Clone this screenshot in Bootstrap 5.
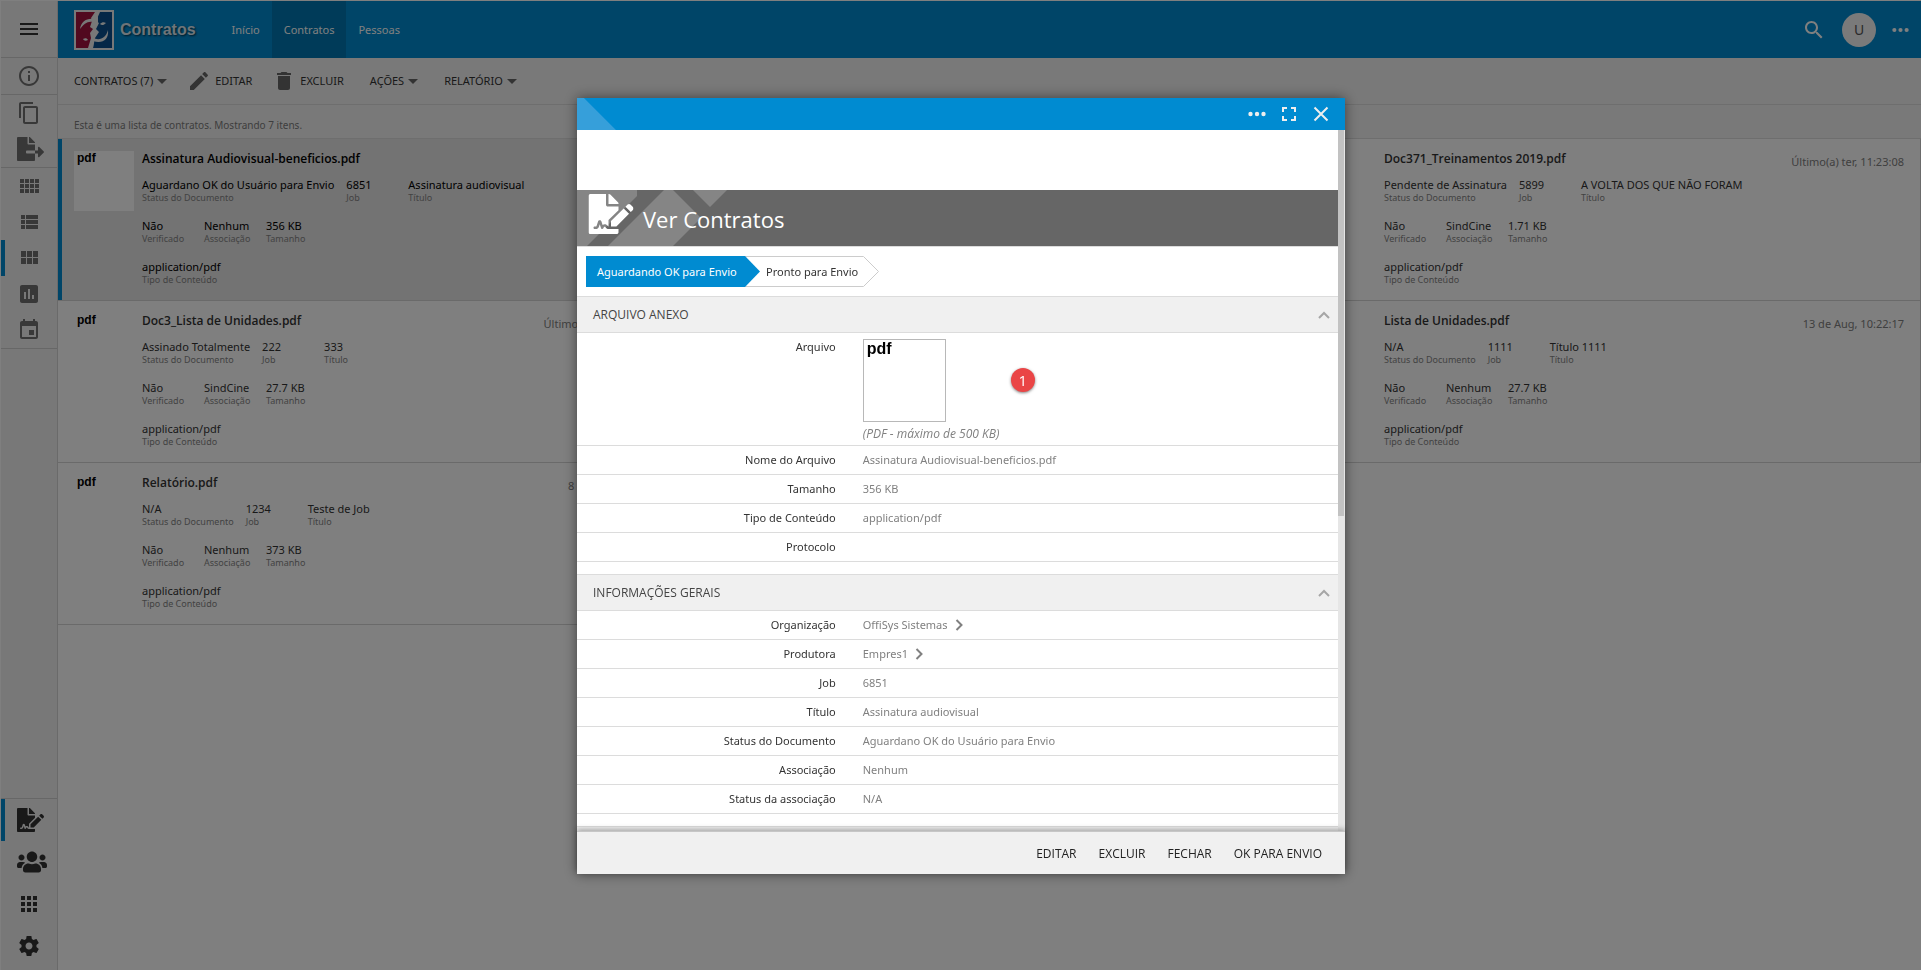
<!DOCTYPE html>
<html lang="pt-BR">
<head>
<meta charset="utf-8">
<meta name="viewport" content="width=device-width, initial-scale=1">
<title>Contratos</title>
<link href="https://cdn.jsdelivr.net/npm/bootstrap@5.3.0/dist/css/bootstrap.min.css" rel="stylesheet">
<script src="https://cdn.jsdelivr.net/npm/bootstrap@5.3.0/dist/js/bootstrap.bundle.min.js"></script>
<style>
  :root { --brand: #008bd1; --line: #dcdcdc; --panel: #f0f0f0; }
  body { font: 11px/16px "Noto Sans", "Open Sans", sans-serif; color: #333; background: #fff; }
  a { color: inherit; text-decoration: none; }
  svg { fill: currentColor; display: block; flex: none; }
  button { border: 0; background: none; padding: 0; color: inherit; }
  .app { min-height: 100vh; border-top: 1px solid #fff; border-left: 1px solid #fff; }

  .side { width: 57px; background: var(--panel); border-right: 1px solid #d4d4d4; color: #707070; }
  .side-group { border-bottom: 1px solid #cfcfcf; }
  .side-btn { display: block; height: 36px; width: 100%; padding-left: 16px; }
  .side-btn svg { width: 24px; height: 24px; }
  .side-btn svg.wide { width: 27px; height: 24px; }
  .side-btn svg.people { width: 30px; height: 24px; }
  .side-btn.current { box-shadow: inset 4px 0 0 var(--brand); }
  .side-menu { height: 56px; color: #333; }
  .side-bottom { border-top: 1px solid #cfcfcf; padding-bottom: 3px; color: #333; }
  .side-bottom .side-btn { height: 42px; }

  .topbar { height: 57px; background: var(--brand); color: #fff; padding-left: 16px; }
  .brand { font: bold 16px/24px "Liberation Sans", Arial, sans-serif; color: #dde9f2; text-shadow: 1px 1px 2px #002f49; margin: 0 24px 0 6px; }
  .topbar .nav-link { height: 57px; padding: 0 12px; color: #fff; display: flex; align-items: center; }
  .topbar .nav-link.active { background: #0077b3; }
  .user-tools { gap: 16px; padding-right: 12px; }
  .avatar { width: 34px; height: 34px; border-radius: 50%; background: #f4f4f4; color: #555; font-size: 14px; }

  .tools { height: 47px; background: #f3f3f3; border-bottom: 1px solid var(--line); padding-left: 16px; }
  .tools svg { color: #666; }
  .tools .with-icon { margin-left: 20px; }
  .tools .with-menu { margin-left: 26px; }
  .summary { height: 34px; background: #f3f3f3; border-bottom: 1px solid var(--line); padding: 6px 16px 0; font-size: 10px; color: #7c7c7c; }

  .records { display: grid; grid-template-columns: repeat(3, 1fr); }
  .record { height: 162px; border-bottom: 1px solid #d4d4d4; padding: 12px 16px 0; gap: 8px; }
  .record.last { border-right: 1px solid #d4d4d4; }
  .record.chosen { background: #e6e6e6; box-shadow: inset 4px 0 0 var(--brand); color: #000; }
  .thumb { width: 60px; height: 60px; background: #fff; color: #000; font: bold 12px/14px "Liberation Sans", Arial, sans-serif; padding-left: 3px; }
  .record h2 { font: 600 12px/16px "Open Sans", sans-serif; margin: 0 0 10px; }
  .record time { color: #808080; padding-top: 3px; }
  .facts { display: flex; gap: 12px; height: 41px; margin: 0; }
  .facts div { min-width: 50px; display: flex; flex-direction: column-reverse; justify-content: flex-end; }
  .facts dd { margin: 0; line-height: 15px; }
  .facts dt { font-size: 9px; line-height: 11px; font-weight: 400; color: #858585; }

  .modal-backdrop { --bs-backdrop-opacity: .5; }
  .modal { padding: 2px 0 0 1px; }
  .modal-dialog { max-width: 768px; margin: 0 auto; height: 100%; }
  .modal-content { height: 80vh; border: 0; border-radius: 0; box-shadow: 0 0 12px rgba(0,0,0,.5); color: #333; }
  .win-bar { height: 32px; background: linear-gradient(45deg, #369fda 27px, transparent 28px), var(--brand); color: #eee; padding-right: 13px; gap: 10px; }
  .win-bar button { width: 22px; display: flex; justify-content: center; }
  .scroll-area { min-height: 0; }
  .scroll-track { width: 7px; background: #e6e6e6; }
  .scroll-thumb { width: 6px; height: 55%; background: #c2c2c2; }
  .hero { margin-top: 60px; height: 57px; background: #666; color: #fff; border-bottom: 1px solid var(--line); }
  .hero .pattern { position: absolute; left: 0; top: 0; }
  .hero h1 { font: 400 22px/28px "Open Sans", sans-serif; margin: 2px 0 0 6px; }
  .steps { height: 49px; padding-left: 9px; }
  .step-now { height: 31px; width: 174px; padding-left: 11px; background: var(--brand); color: #fff; clip-path: polygon(0 0, 159px 0, 100% 50%, 159px 100%, 0 100%); z-index: 1; }
  .step-next { height: 31px; width: 134px; margin-left: -15px; padding-left: 21px; }
  .step-next svg { position: absolute; left: 0; top: 0; }
  .group-head { height: 37px; background: var(--panel); border-top: 1px solid var(--line); border-bottom: 1px solid var(--line); padding: 0 8px 0 16px; font: 12px/16px "Open Sans", sans-serif; color: #444; }
  .group-head svg { color: #a6a6a6; }
  .fields { margin: 0 0 12px; }
  .fields > div { display: flex; min-height: 29px; border-bottom: 1px solid var(--line); align-items: center; }
  .fields > .file-row { align-items: flex-start; padding: 6px 0 3px; }
  .fields dt { width: 34%; font-weight: 400; text-align: right; }
  .fields dd { margin: 0 0 0 27px; color: #808080; display: flex; align-items: center; gap: 7px; }
  .fields .file-cell { width: 148px; display: block; }
  .file-box { width: 83px; height: 83px; border: 1px solid #b8b8b8; color: #000; font: bold 16px/18px "Liberation Sans", Arial, sans-serif; padding-left: 3px; }
  .file-row em { font-size: 12px; font-family: "Open Sans", sans-serif; }
  .fields .marker { width: 24px; height: 24px; display: block; margin: 29px 0 0; border-radius: 50%; background: #ea4546; color: #fff; font: 15px/24px "Open Sans", sans-serif; text-align: center; box-shadow: 0 1px 3px rgba(0,0,0,.5); }
  .win-foot { height: 43px; background: var(--panel); border-top: 1px solid #c6c6c6; box-shadow: 0 -2px 5px rgba(0,0,0,.3); padding: 2px 23px 0 0; gap: 22px; font: 12px/16px "Open Sans", sans-serif; color: #222; z-index: 2; }
</style>
</head>
<body>
<svg width="0" height="0" class="position-absolute" aria-hidden="true">
  <defs>
    <symbol id="i-sign" viewBox="0 0 576 512"><path d="M218.17 424.14c-2.95-5.92-8.09-6.52-10.17-6.52s-7.22.59-10.02 6.19l-7.67 15.34c-6.37 12.78-25.03 11.37-29.48-2.09L144 386.59l-10.61 31.88c-5.89 17.66-22.38 29.53-41 29.53H80c-8.84 0-16-7.16-16-16s7.16-16 16-16h12.39c4.83 0 9.11-3.08 10.64-7.66l18.19-54.64c3.3-9.81 12.44-16.41 22.78-16.41s19.48 6.59 22.77 16.41l13.88 41.64c19.75-16.19 54.06-9.7 66 14.16 1.89 3.78 5.49 5.95 9.36 6.26v-82.12l128-127.09V160H248c-13.2 0-24-10.8-24-24V0H24C10.7 0 0 10.7 0 24v464c0 13.3 10.7 24 24 24h336c13.3 0 24-10.7 24-24v-40l-128-.11c-16.12-.31-30.58-9.28-37.83-23.75zM384 121.9c0-6.3-2.5-12.4-7-16.9L279.1 7c-4.5-4.5-10.6-7-17-7H256v128h128v-6.1zm-96 225.06V416h68.99l161.68-162.78-67.88-67.88L288 346.96zm280.54-179.63l-31.87-31.87c-9.94-9.94-26.07-9.94-36.01 0l-27.25 27.25 67.88 67.88 27.25-27.25c9.95-9.94 9.95-26.07 0-36.01z"/></symbol>
    <symbol id="i-export" viewBox="0 0 576 512"><path d="M384 121.9c0-6.3-2.5-12.4-7-16.9L279.1 7c-4.5-4.5-10.6-7-17-7H256v128h128zM571 308l-95.7-96.4c-10.1-10.1-27.4-3-27.4 11.3V288h-64v64h64v65.2c0 14.3 17.3 21.4 27.4 11.3L571 332c6.6-6.6 6.6-17.4 0-24zm-379 28v-32c0-8.8 7.2-16 16-16h176V160H248c-13.2 0-24-10.8-24-24V0H24C10.7 0 0 10.7 0 24v464c0 13.3 10.7 24 24 24h336c13.3 0 24-10.7 24-24V352H208c-8.8 0-16-7.2-16-16z"/></symbol>
    <symbol id="i-users" viewBox="0 0 640 512"><path d="M96 224c35.3 0 64-28.7 64-64s-28.7-64-64-64-64 28.7-64 64 28.7 64 64 64zm448 0c35.3 0 64-28.7 64-64s-28.7-64-64-64-64 28.7-64 64 28.7 64 64 64zm32 32h-64c-17.6 0-33.5 7.1-45.1 18.6 40.3 22.1 68.9 62 75.1 109.4h66c17.7 0 32-14.3 32-32v-32c0-35.3-28.7-64-64-64zm-256 0c61.9 0 112-50.1 112-112S381.9 32 320 32 208 82.1 208 144s50.1 112 112 112zm76.8 32h-8.3c-20.8 10-43.9 16-68.5 16s-47.6-6-68.5-16h-8.3C179.6 288 128 339.6 128 403.2V432c0 26.5 21.5 48 48 48h288c26.5 0 48-21.5 48-48v-28.8c0-63.6-51.6-115.2-115.2-115.2zm-223.7-13.4C161.5 263.1 145.6 256 128 256H64c-35.3 0-64 28.7-64 64v32c0 17.7 14.3 32 32 32h65.9c6.3-47.4 34.9-87.3 75.2-109.4z"/></symbol>
    <symbol id="i-dots" viewBox="0 0 18 6"><circle cx="2.5" cy="3" r="2.2"/><circle cx="9" cy="3" r="2.2"/><circle cx="15.5" cy="3" r="2.2"/></symbol>
    <symbol id="i-caret" viewBox="0 0 10 5"><path d="M0 0h10L5 5z"/></symbol>
    <symbol id="i-up" viewBox="0 0 12 8"><path d="M1 7l5-5 5 5" fill="none" stroke="currentColor" stroke-width="2"/></symbol>
    <symbol id="i-next" viewBox="0 0 8 12"><path d="M1.5 1l5 5-5 5" fill="none" stroke="currentColor" stroke-width="2"/></symbol>
  </defs>
</svg>

<div class="app d-flex">
  <aside class="side d-flex flex-column flex-shrink-0">
    <div class="side-group">
      <button class="side-btn side-menu" aria-label="Menu"><svg viewBox="0 0 24 24"><path d="M3 18h18v-2H3v2zm0-5h18v-2H3v2zm0-7v2h18V6H3z"/></svg></button>
    </div>
    <div class="side-group">
      <button class="side-btn" aria-label="Informações"><svg viewBox="0 0 24 24"><path d="M11 17h2v-6h-2v6zm1-15C6.48 2 2 6.48 2 12s4.48 10 10 10 10-4.48 10-10S17.52 2 12 2zm0 18c-4.41 0-8-3.59-8-8s3.59-8 8-8 8 3.59 8 8-3.59 8-8 8zM11 9h2V7h-2v2z"/></svg></button>
    </div>
    <div class="side-group">
      <button class="side-btn" aria-label="Copiar"><svg viewBox="0 0 24 24"><path d="M16 1H4c-1.1 0-2 .9-2 2v14h2V3h12V1zm3 4H8c-1.1 0-2 .9-2 2v14c0 1.1.9 2 2 2h11c1.1 0 2-.9 2-2V7c0-1.1-.9-2-2-2zm0 16H8V7h11v14z"/></svg></button>
      <button class="side-btn" aria-label="Exportar"><svg class="wide"><use href="#i-export"/></svg></button>
    </div>
    <div class="side-group">
      <button class="side-btn" aria-label="Grade"><svg viewBox="0 0 24 24"><path d="M3 9h4V5H3v4zm0 5h4v-4H3v4zm5 0h4v-4H8v4zm5 0h4v-4h-4v4zM8 9h4V5H8v4zm5-4v4h4V5h-4zm5 9h4v-4h-4v4zM3 19h4v-4H3v4zm5 0h4v-4H8v4zm5 0h4v-4h-4v4zm5 0h4v-4h-4v4zm0-14v4h4V5h-4z"/></svg></button>
      <button class="side-btn" aria-label="Lista"><svg viewBox="0 0 24 24"><path d="M4 14h4v-4H4v4zm0 5h4v-4H4v4zM4 9h4V5H4v4zm5 5h12v-4H9v4zm0 5h12v-4H9v4zM9 5v4h12V5H9z"/></svg></button>
      <button class="side-btn current" aria-label="Cartões"><svg viewBox="0 0 24 24"><path d="M4 11h5V5H4v6zm0 7h5v-6H4v6zm6 0h5v-6h-5v6zm6 0h5v-6h-5v6zm-6-7h5V5h-5v6zm6-6v6h5V5h-5z"/></svg></button>
      <button class="side-btn" aria-label="Gráficos"><svg viewBox="0 0 24 24"><path d="M19 3H5c-1.1 0-2 .9-2 2v14c0 1.1.9 2 2 2h14c1.1 0 2-.9 2-2V5c0-1.1-.9-2-2-2zM9 17H7v-7h2v7zm4 0h-2V7h2v10zm4 0h-2v-4h2v4z"/></svg></button>
      <button class="side-btn" aria-label="Calendário"><svg viewBox="0 0 24 24"><path d="M17 12h-5v5h5v-5zM16 1v2H8V1H6v2H5c-1.11 0-1.99.9-1.99 2L3 19c0 1.1.89 2 2 2h14c1.1 0 2-.9 2-2V5c0-1.1-.9-2-2-2h-1V1h-2zm3 18H5V8h14v11z"/></svg></button>
    </div>
    <div class="side-bottom mt-auto">
      <button class="side-btn current" aria-label="Contratos"><svg class="wide"><use href="#i-sign"/></svg></button>
      <button class="side-btn" aria-label="Pessoas"><svg class="people"><use href="#i-users"/></svg></button>
      <button class="side-btn" aria-label="Aplicativos"><svg viewBox="0 0 24 24"><path d="M4 8h4V4H4v4zm6 12h4v-4h-4v4zm-6 0h4v-4H4v4zm0-6h4v-4H4v4zm6 0h4v-4h-4v4zm6-10v4h4V4h-4zm-6 4h4V4h-4v4zm6 6h4v-4h-4v4zm0 6h4v-4h-4v4z"/></svg></button>
      <button class="side-btn" aria-label="Configurações"><svg viewBox="0 0 24 24"><path d="M19.43 12.98c.04-.32.07-.64.07-.98s-.03-.66-.07-.98l2.11-1.65c.19-.15.24-.42.12-.64l-2-3.46c-.12-.22-.39-.3-.61-.22l-2.49 1c-.52-.4-1.08-.73-1.69-.98l-.38-2.65C14.46 2.18 14.25 2 14 2h-4c-.25 0-.46.18-.49.42l-.38 2.65c-.61.25-1.17.59-1.69.98l-2.49-1c-.23-.09-.49 0-.61.22l-2 3.46c-.13.22-.07.49.12.64l2.11 1.65c-.04.32-.07.65-.07.98s.03.66.07.98l-2.11 1.65c-.19.15-.24.42-.12.64l2 3.46c.12.22.39.3.61.22l2.49-1c.52.4 1.08.73 1.69.98l.38 2.65c.03.24.24.42.49.42h4c.25 0 .46-.18.49-.42l.38-2.65c.61-.25 1.17-.59 1.69-.98l2.49 1c.23.09.49 0 .61-.22l2-3.46c.12-.22.07-.49-.12-.64l-2.11-1.65zM12 15.5c-1.93 0-3.5-1.57-3.5-3.5s1.57-3.5 3.5-3.5 3.5 1.57 3.5 3.5-1.57 3.5-3.5 3.5z"/></svg></button>
    </div>
  </aside>

  <div class="flex-grow-1">
    <header class="topbar d-flex align-items-center">
      <svg width="40" height="40" viewBox="0 0 40 40" aria-hidden="true">
        <path fill="#f0f0f0" d="M0 0h40v40H0z"/>
        <path fill="#a3123f" d="M2 2h20L17 38H2z"/>
        <path fill="#0a4f8f" d="M24 2h14v36H19l1-9 2-6-2-4 4-6z"/>
        <path fill="#f0f0f0" d="M21 2h5l-4 9 3 2-3 6 3 3-4 6-2 10h-5l3-10-1-5 3-4-3-2 2-6-1-3z"/>
        <path fill="#f0f0f0" d="M6 19C7 12 12 8 20 9l-1 3c-6-1-9 2-13 7zM26 14c2-2 4-2 6-1-2 2-4 3-6 1zM19 28c7 3 13 0 15-8 1 10-6 14-15 11zM9 29c2-1 4-1 5 1-2 1-4 1-5-1z"/>
      </svg>
      <a href="#" class="brand">Contratos</a>
      <nav class="nav">
        <a class="nav-link" href="#">Início</a>
        <a class="nav-link active" href="#" aria-current="page">Contratos</a>
        <a class="nav-link" href="#">Pessoas</a>
      </nav>
      <div class="user-tools ms-auto d-flex align-items-center">
        <button aria-label="Pesquisar"><svg width="24" height="24" viewBox="0 0 24 24"><path d="M15.5 14h-.79l-.28-.27C15.41 12.59 16 11.11 16 9.5 16 5.91 13.09 3 9.5 3S3 5.91 3 9.5 5.91 16 9.5 16c1.61 0 3.09-.59 4.23-1.57l.27.28v.79l5 4.99L20.49 19l-4.99-5zm-6 0C7.01 14 5 11.99 5 9.5S7.01 5 9.5 5 14 7.01 14 9.5 11.99 14 9.5 14z"/></svg></button>
        <button class="avatar">U</button>
        <button aria-label="Mais"><svg width="17" height="6"><use href="#i-dots"/></svg></button>
      </div>
    </header>

    <div class="tools d-flex align-items-center">
      <button class="d-flex align-items-center gap-1">CONTRATOS (7)<svg width="10" height="5"><use href="#i-caret"/></svg></button>
      <button class="with-icon d-flex align-items-center gap-1"><svg width="24" height="24" viewBox="0 0 24 24"><path d="M3 17.25V21h3.75L17.81 9.94l-3.75-3.75L3 17.25zM20.71 7.04c.39-.39.39-1.02 0-1.41l-2.34-2.34c-.39-.39-1.02-.39-1.41 0l-1.83 1.83 3.75 3.75 1.83-1.83z"/></svg>EDITAR</button>
      <button class="with-icon d-flex align-items-center gap-1"><svg width="24" height="24" viewBox="0 0 24 24"><path d="M6 19c0 1.1.9 2 2 2h8c1.1 0 2-.9 2-2V7H6v12zM19 4h-3.5l-1-1h-5l-1 1H5v2h14V4z"/></svg>EXCLUIR</button>
      <button class="with-menu d-flex align-items-center gap-1">AÇÕES<svg width="10" height="5"><use href="#i-caret"/></svg></button>
      <button class="with-menu d-flex align-items-center gap-1">RELATÓRIO<svg width="10" height="5"><use href="#i-caret"/></svg></button>
    </div>
    <div class="summary d-flex align-items-center">Esta é uma lista de contratos. Mostrando 7 itens.</div>

    <main class="records">
      <article class="record chosen d-flex">
        <div class="thumb flex-shrink-0">pdf</div>
        <div class="flex-grow-1">
          <h2>Assinatura Audiovisual-beneficios.pdf</h2>
          <dl class="facts"><div><dt>Status do Documento</dt><dd>Aguardano OK do Usuário para Envio</dd></div><div><dt>Job</dt><dd>6851</dd></div><div><dt>Título</dt><dd>Assinatura audiovisual</dd></div></dl>
          <dl class="facts"><div><dt>Verificado</dt><dd>Não</dd></div><div><dt>Associação</dt><dd>Nenhum</dd></div><div><dt>Tamanho</dt><dd>356 KB</dd></div></dl>
          <dl class="facts"><div><dt>Tipo de Conteúdo</dt><dd>application/pdf</dd></div></dl>
        </div>
        <time>Ontem, 11:23:08</time>
      </article>
      <article class="record"></article>
      <article class="record last d-flex">
        <div class="thumb flex-shrink-0">pdf</div>
        <div class="flex-grow-1">
          <h2>Doc371_Treinamentos 2019.pdf</h2>
          <dl class="facts"><div><dt>Status do Documento</dt><dd>Pendente de Assinatura</dd></div><div><dt>Job</dt><dd>5899</dd></div><div><dt>Título</dt><dd>A VOLTA DOS QUE NÃO FORAM</dd></div></dl>
          <dl class="facts"><div><dt>Verificado</dt><dd>Não</dd></div><div><dt>Associação</dt><dd>SindCine</dd></div><div><dt>Tamanho</dt><dd>1.71 KB</dd></div></dl>
          <dl class="facts"><div><dt>Tipo de Conteúdo</dt><dd>application/pdf</dd></div></dl>
        </div>
        <time>Último(a) ter, 11:23:08</time>
      </article>
      <article class="record d-flex">
        <div class="thumb flex-shrink-0">pdf</div>
        <div class="flex-grow-1">
          <h2>Doc3_Lista de Unidades.pdf</h2>
          <dl class="facts"><div><dt>Status do Documento</dt><dd>Assinado Totalmente</dd></div><div><dt>Job</dt><dd>222</dd></div><div><dt>Título</dt><dd>333</dd></div></dl>
          <dl class="facts"><div><dt>Verificado</dt><dd>Não</dd></div><div><dt>Associação</dt><dd>SindCine</dd></div><div><dt>Tamanho</dt><dd>27.7 KB</dd></div></dl>
          <dl class="facts"><div><dt>Tipo de Conteúdo</dt><dd>application/pdf</dd></div></dl>
        </div>
        <time>Último(a) qua, 11:23:08</time>
      </article>
      <article class="record"></article>
      <article class="record last d-flex">
        <div class="thumb flex-shrink-0">pdf</div>
        <div class="flex-grow-1">
          <h2>Lista de Unidades.pdf</h2>
          <dl class="facts"><div><dt>Status do Documento</dt><dd>N/A</dd></div><div><dt>Job</dt><dd>1111</dd></div><div><dt>Título</dt><dd>Título 1111</dd></div></dl>
          <dl class="facts"><div><dt>Verificado</dt><dd>Não</dd></div><div><dt>Associação</dt><dd>Nenhum</dd></div><div><dt>Tamanho</dt><dd>27.7 KB</dd></div></dl>
          <dl class="facts"><div><dt>Tipo de Conteúdo</dt><dd>application/pdf</dd></div></dl>
        </div>
        <time>13 de Aug, 10:22:17</time>
      </article>
      <article class="record d-flex">
        <div class="thumb flex-shrink-0">pdf</div>
        <div class="flex-grow-1">
          <h2>Relatório.pdf</h2>
          <dl class="facts"><div><dt>Status do Documento</dt><dd>N/A</dd></div><div><dt>Job</dt><dd>1234</dd></div><div><dt>Título</dt><dd>Teste de Job</dd></div></dl>
          <dl class="facts"><div><dt>Verificado</dt><dd>Não</dd></div><div><dt>Associação</dt><dd>Nenhum</dd></div><div><dt>Tamanho</dt><dd>373 KB</dd></div></dl>
          <dl class="facts"><div><dt>Tipo de Conteúdo</dt><dd>application/pdf</dd></div></dl>
        </div>
        <time>8 de Aug, 10:22:17</time>
      </article>
    </main>
  </div>
</div>

<div class="modal-backdrop show"></div>
<div class="modal show d-block" role="dialog" aria-modal="true" aria-labelledby="win-title">
  <div class="modal-dialog d-flex align-items-center">
    <div class="modal-content">
      <div class="win-bar d-flex align-items-center justify-content-end flex-shrink-0">
        <button aria-label="Mais"><svg width="18" height="6"><use href="#i-dots"/></svg></button>
        <button aria-label="Tela cheia"><svg width="22" height="22" viewBox="0 0 22 22"><path fill="none" stroke="currentColor" stroke-width="2" d="M5 9V5h4M13 5h4v4M17 13v4h-4M9 17H5v-4"/></svg></button>
        <button aria-label="Fechar"><svg width="22" height="22" viewBox="0 0 22 22"><path fill="none" stroke="currentColor" stroke-width="2" d="M4.5 4.5l13 13M17.5 4.5l-13 13"/></svg></button>
      </div>
      <div class="scroll-area d-flex flex-grow-1">
        <div class="flex-grow-1 overflow-hidden">
          <div class="hero position-relative d-flex">
            <svg class="pattern" width="150" height="56" viewBox="0 0 150 56" aria-hidden="true"><path fill="#858585" d="M0 0h60v6L10 56H0zM31 56L87 0h9l28 28-28 28zM116 0h34l-17 17z"/></svg>
            <svg class="position-relative mt-1 ms-2" width="52" height="40" viewBox="-20 0 616 512"><use href="#i-sign" width="576" height="512"/></svg>
            <h1 id="win-title" class="position-relative align-self-center">Ver Contratos</h1>
          </div>
          <div class="steps d-flex align-items-center">
            <div class="step-now d-flex align-items-center position-relative">Aguardando OK para Envio</div>
            <div class="step-next d-flex align-items-center position-relative"><svg width="134" height="31" viewBox="0 0 134 31" aria-hidden="true"><path d="M0 .5h118.5l15 15-15 15H0" fill="none" stroke="#ccc"/></svg>Pronto para Envio</div>
          </div>
          <div class="group-head d-flex align-items-center justify-content-between">ARQUIVO ANEXO<button aria-label="Recolher"><svg width="12" height="8"><use href="#i-up"/></svg></button></div>
          <dl class="fields">
            <div class="file-row">
              <dt>Arquivo</dt>
              <dd class="file-cell"><div class="file-box">pdf</div><em class="d-block mt-1">(PDF - máximo de 500 KB)</em></dd>
              <dd class="marker">1</dd>
            </div>
            <div><dt>Nome do Arquivo</dt><dd>Assinatura Audiovisual-beneficios.pdf</dd></div>
            <div><dt>Tamanho</dt><dd>356 KB</dd></div>
            <div><dt>Tipo de Conteúdo</dt><dd>application/pdf</dd></div>
            <div><dt>Protocolo</dt><dd></dd></div>
          </dl>
          <div class="group-head d-flex align-items-center justify-content-between">INFORMAÇÕES GERAIS<button aria-label="Recolher"><svg width="12" height="8"><use href="#i-up"/></svg></button></div>
          <dl class="fields">
            <div><dt>Organização</dt><dd><a href="#">OffiSys Sistemas</a><svg width="8" height="12"><use href="#i-next"/></svg></dd></div>
            <div><dt>Produtora</dt><dd><a href="#">Empres1</a><svg width="8" height="12"><use href="#i-next"/></svg></dd></div>
            <div><dt>Job</dt><dd>6851</dd></div>
            <div><dt>Título</dt><dd>Assinatura audiovisual</dd></div>
            <div><dt>Status do Documento</dt><dd>Aguardano OK do Usuário para Envio</dd></div>
            <div><dt>Associação</dt><dd>Nenhum</dd></div>
            <div><dt>Status da associação</dt><dd>N/A</dd></div>
          </dl>
          <div class="group-head"></div>
        </div>
        <div class="scroll-track flex-shrink-0"><div class="scroll-thumb"></div></div>
      </div>
      <div class="win-foot d-flex align-items-center justify-content-end flex-shrink-0">
        <button>EDITAR</button><button>EXCLUIR</button><button>FECHAR</button><button>OK PARA ENVIO</button>
      </div>
    </div>
  </div>
</div>
</body>
</html>
